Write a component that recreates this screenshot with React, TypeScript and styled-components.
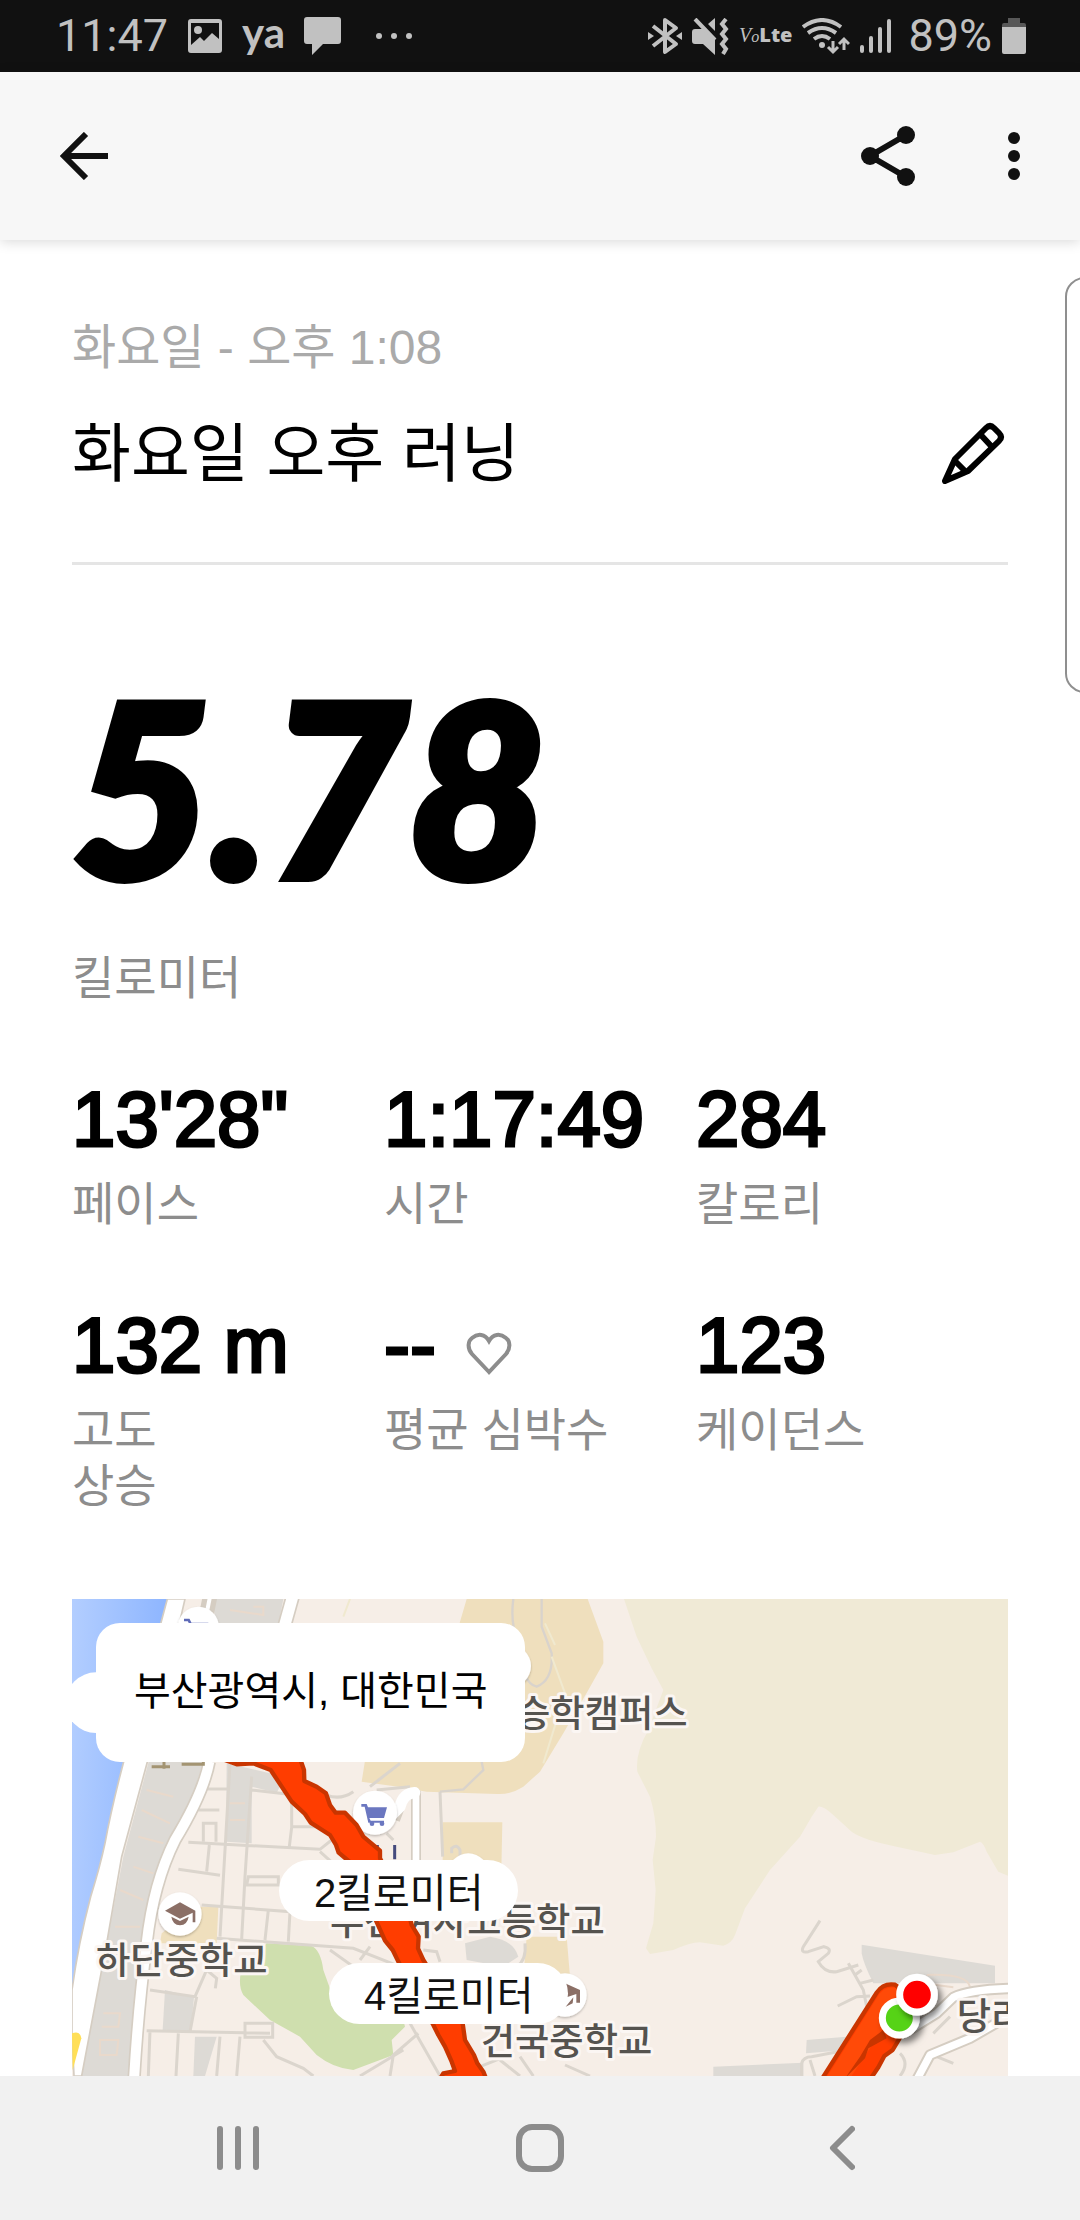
import React from "react";
import styled, { createGlobalStyle } from "styled-components";

const GlobalStyle = createGlobalStyle`
  * { box-sizing: border-box; }
  html, body { margin: 0; padding: 0; background: #ffffff; }
  body { font-family: "Liberation Sans", "Noto Sans CJK KR", sans-serif; color: #000000; }
  svg { display: block; flex: none; }
  h1, h2, p, dl, dt, dd { margin: 0; font-weight: 400; }
`;

const Screen = styled.div`
  height: 100vh;
  display: flex;
  flex-direction: column;
  overflow: hidden;
  background: #ffffff;
`;

const StatusBar = styled.header`
  flex: none;
  height: 72px;
  padding: 0 54px 0 56px;
  display: flex;
  align-items: center;
  justify-content: space-between;
  background: #111111;
  color: #c1c1c1;
  font-family: Roboto, sans-serif;
  font-size: 45px;
  line-height: 56px;
`;

const StatusGroup = styled.div<{ $gap: number }>`
  display: flex;
  align-items: center;
  gap: ${(p) => p.$gap}px;
`;

const BatteryLevel = styled.span`
  padding-left: 6px;
`;

const AppBadge = styled.span`
  width: 42px;
  font-family: Lato, sans-serif;
  font-weight: 700;
  font-size: 42px;
  line-height: 40px;
  padding-bottom: 8px;
`;

const Volte = styled.span`
  display: flex;
  align-items: baseline;
  font-family: "Open Sans", sans-serif;
  font-weight: 800;
  font-size: 20px;
  line-height: 32px;
  em {
    font-family: "Liberation Serif", serif;
    font-weight: 400;
  }
  em + em {
    font-size: 16px;
  }
`;

const AppBar = styled.nav`
  flex: none;
  height: 168px;
  padding: 0 30px 0 48px;
  display: flex;
  align-items: center;
  background: #f7f7f7;
  box-shadow: 0 2px 12px rgba(0, 0, 0, 0.15);
  z-index: 1;
`;

const Spacer = styled.span`
  flex: 1;
`;

const IconButton = styled.button`
  flex: none;
  padding: 0;
  border: 0;
  background: none;
  color: inherit;
  display: flex;
  align-items: center;
  justify-content: center;
`;

const BarButton = styled(IconButton)`
  width: 72px;
  height: 96px;
  color: #111111;
  & + & { margin-left: 54px; }
`;

const Content = styled.main`
  position: relative;
  flex: 1;
  min-height: 0;
  overflow: hidden;
  display: flex;
  flex-direction: column;
  padding: 80px 72px 0;
`;

const EdgeHandle = styled.div`
  position: absolute;
  top: 37px;
  right: -24px;
  width: 39px;
  height: 416px;
  border: 2px solid #8f8f8f;
  border-radius: 20px;
  background: #ffffff;
`;

const RunHeader = styled.section`
  border-bottom: 3px solid #e5e5e5;
  padding-bottom: 72px;
`;

const DateLine = styled.p`
  font-size: 48px;
  line-height: 56px;
  color: #aaaaaa;
  margin-bottom: 40px;
`;

const TitleRow = styled.div`
  display: flex;
  align-items: center;
  justify-content: space-between;
`;

const Title = styled.h1`
  padding-top: 2px;
  font-size: 64px;
  line-height: 72px;
`;

const Distance = styled.section`
  padding-top: 100px;
  margin-bottom: 73px;
`;

const DistanceValue = styled.p`
  font-family: Lato, sans-serif;
  font-style: italic;
  font-weight: 900;
  font-size: 240px;
  line-height: 240px;
  margin-bottom: 45px;
  -webkit-text-stroke: 8px #000000;
`;

const Label = styled.p`
  font-size: 46px;
  line-height: 56px;
  color: #8d8d8d;
`;

const StatGrid = styled.dl`
  display: grid;
  grid-template-columns: repeat(3, 1fr);
  row-gap: 73px;
  margin-bottom: 85px;
`;

const Stat = styled.div`
  display: flex;
  flex-direction: column-reverse;
  justify-content: flex-end;
  white-space: nowrap;
`;

const StatValue = styled.dd`
  display: flex;
  align-items: center;
  gap: 30px;
  font-size: 78px;
  line-height: 80px;
  margin-bottom: 17px;
  -webkit-text-stroke: 3px #000000;
  svg { margin-top: 18px; }
`;

const MapCard = styled.section`
  position: relative;
  flex: 1 0 477px;
  overflow: hidden;
  background: #f6eee7;
`;

const MapDrawing = styled.svg`
  width: 100%;
  height: 100%;
  text {
    font-family: "Noto Sans CJK KR", sans-serif;
    font-weight: 500;
    font-size: 112px;
    fill: #55534f;
    stroke: #fbf6f3;
    stroke-width: 18px;
    stroke-linejoin: round;
    paint-order: stroke;
  }
`;

const PlaceCallout = styled.div`
  position: absolute;
  top: 24px;
  left: 24px;
  padding: 40px 38px 43px;
  border-radius: 24px;
  background: #ffffff;
  font-size: 40px;
  line-height: 56px;
  white-space: nowrap;
`;

const KmPin = styled.div<{ $x: number; $y: number }>`
  position: absolute;
  left: ${(p) => p.$x}px;
  top: ${(p) => p.$y}px;
  padding: 5px 35px 0;
  border-radius: 31px;
  background: #ffffff;
  color: #111111;
  font-size: 40px;
  line-height: 56px;
  white-space: nowrap;
`;

const SystemNav = styled.nav`
  flex: none;
  height: 144px;
  padding: 0 8%;
  display: flex;
  background: #f1f1f1;
  color: #8c8c8c;
`;

const NavButton = styled(IconButton)`
  flex: 1;
`;

const stats = [
  { label: "페이스", value: "13'28\"" },
  { label: "시간", value: "1:17:49" },
  { label: "칼로리", value: "284" },
  { label: "고도\n상승", value: "132 m" },
  { label: "평균 심박수", value: "--", heart: true },
  { label: "케이던스", value: "123" },
];

const StatLabel = styled(Label).attrs({ as: "dt" })`
  white-space: pre-line;
`;

const HeartIcon = () => (
  <svg width="46" height="44" viewBox="0 0 46 44" fill="none" stroke="#8d8d8d" strokeWidth="4">
    <path d="M23 40 L6 22 C1 16 2 9 6 6 C12 1 19 2 23 9 C27 2 34 1 40 6 C44 9 45 16 40 22 Z" />
  </svg>
);

const StatusLeftIcons = () => (
  <>
    <svg width="34" height="34" viewBox="0 0 34 34" fill="#c1c1c1">
      <path fillRule="evenodd" d="M3 0H31Q34 0 34 3V31Q34 34 31 34H3Q0 34 0 31V3Q0 0 3 0ZM3 4V26L12 18L16 22L24 14L31 20V4Z" />
      <circle cx="10" cy="11" r="4" />
    </svg>
    <AppBadge>ya</AppBadge>
    <svg width="37" height="38" viewBox="0 0 37 38" fill="#c1c1c1">
      <path d="M3 0H34Q37 0 37 3V24Q37 27 34 27H19L8 38V27H3Q0 27 0 24V3Q0 0 3 0Z" />
    </svg>
  </>
);

const roadCase = "#d5cdc2";
const lane = "#dbd5cd";

const RunMap = () => (
  <MapDrawing viewBox="6 27 2808 1431" preserveAspectRatio="xMinYMin slice" role="img" aria-label="러닝 경로 지도">
    <defs>
      <linearGradient id="river" x1="0" y1="0" x2="1" y2="0.15">
        <stop offset="0" stopColor="#b3ceff" />
        <stop offset="1" stopColor="#8db5ff" />
      </linearGradient>
      <filter id="pinShadow" x="-40%" y="-40%" width="190%" height="190%">
        <feDropShadow dx="12" dy="14" stdDeviation="10" floodOpacity="0.5" />
      </filter>
      <filter id="poiShadow" x="-20%" y="-20%" width="140%" height="150%">
        <feDropShadow dx="0" dy="4" stdDeviation="3" floodOpacity="0.25" />
      </filter>
    </defs>
    <rect x="6" y="27" width="2808" height="1431" fill="#f6eee7" />

    {/* hills, campus grounds and parks */}
    <path fill="#f0ead6" d="M1662 27L1700 140L1745 235L1780 300L1735 420Q1695 490 1702 545L1740 620Q1758 680 1758 740L1748 810L1757 900L1750 1000L1728 1075L1740 1092L1810 1080Q1860 1058 1890 1057L1960 1067Q1985 1060 1995 1035L2025 955L2100 840L2190 740L2225 680L2245 650Q2260 648 2290 675L2345 725Q2380 750 2480 770L2595 795L2650 787L2730 755Q2740 758 2750 785L2785 845L2814 857V27Z" />
    <g fill="#efdfbd">
      <path d="M1190 27H1553L1600 155V220L1555 300L1480 430L1410 545L1360 590Q1320 615 1280 612L1070 605L985 590L875 575L890 480L1110 300Z" />
      <path d="M1118 697L1297 697L1294 840H1118Z" />
      <path d="M1370 1040L1490 1040L1500 1160H1360Z" />
      <path d="M380 950L445 950L440 1060H270L275 1030Z" />
    </g>
    <g fill="#dddad5">
      <path d="M425 27H640L625 105H440Z" />
      <path d="M240 500H405L330 740L250 900L215 1100L175 1458H35L110 1060L160 800Z" />
      <path d="M470 520L645 560L620 608L545 590V760L468 755Z" />
      <path d="M285 1200L372 1222L362 1325L278 1320Z" />
      <path d="M375 1340H440L405 1458H370Z" />
      <path d="M1185 1060L1260 1040Q1330 1050 1345 1100L1300 1130L1190 1110Z" />
      <path d="M2375 1064L2775 1127V1180H2410Q2380 1120 2375 1090Z" />
      <path d="M2210 1350L2330 1340V1380L2208 1390Z" />
      <path d="M1930 1430L2200 1418V1458H1930Z" />
    </g>
    <path fill="#cfdfae" d="M590 1060L725 1068Q752 1080 760 1140L785 1210L1000 1290L1005 1310L965 1350L970 1395L850 1440Q790 1435 740 1395L690 1340L600 1290L520 1215Q505 1190 512 1150Z" />

    {/* minor streets */}
    <g fill="none" stroke={lane} strokeWidth="9">
      <path d="M410 597H480M545 600L650 612M385 660H448M355 757L750 778L785 750M325 838L450 856M480 520L450 1040M545 560L525 860L515 1048M665 620V710H740M665 712L658 770" />
      <path d="M400 755V700H438V755M418 765L410 845M535 860H625V885H530ZM395 945L660 965L655 1055M595 960L585 1050M440 1045L850 1075L990 1130" />
      <path d="M240 1200L375 1220L410 1140L440 1165L436 1195M380 1220L360 1325M230 1322L600 1330M525 1300H608V1342H525ZM240 1322L235 1458M325 1330L318 1458M450 1340L440 1458M510 1340L500 1458M580 1350L620 1400L700 1435L730 1458" />
      <path d="M750 785L800 830M780 1080L850 1130L980 1150M900 1070L870 1110M1110 605L1118 800M920 600L1020 590M740 600Q800 640 850 605M950 730L970 750M900 590L990 520M1145 790V775Q1160 760 1170 780V800" />
      <path d="M1060 1080L1100 1085L1110 1115M1020 1300L1110 1458M1045 1330L970 1395L960 1458M1230 1430L1330 1390M1290 1410L1350 1458M1350 1400L1390 1458M1485 1425L1560 1458M1000 1380L870 1458" />
      <path d="M1340 1130Q1370 1110 1365 1060" />
      <path d="M2250 992L2200 1070Q2190 1090 2215 1085L2262 1070Q2285 1075 2275 1090L2245 1115Q2265 1150 2300 1145L2365 1125M2335 1120L2380 1200L2390 1250M2303 1248L2360 1220L2400 1218M2355 1155L2375 1140M2370 1180L2410 1170" />
      <path d="M2195 1458V1420Q2200 1400 2225 1400L2330 1380M2220 1410L2235 1458M2490 1390Q2520 1420 2490 1458M2590 1330L2640 1280M2600 1400L2650 1420M2570 1290L2620 1260" />
    </g>
    <g fill="none" stroke="#e9d9cb" strokeWidth="6">
      <path d="M230 600L310 620M215 660L300 700M205 740L280 760M190 830L250 850M150 900L220 930M135 1010L210 1010M100 1270H150L145 1310H95M90 1350H145L140 1395H90ZM480 640H525M480 690H525M480 60L580 75V50H550M2570 1155Q2690 1150 2700 1190M2560 1180L2650 1192" />
    </g>
    <g fill="none" stroke="#d9d3cc" strokeWidth="7">
      <path d="M1330 27Q1320 100 1345 160Q1355 280 1400 290Q1450 270 1445 190L1415 110V27M1110 605L1180 598L1240 540L1235 515" />
    </g>
    <path d="M1425 100L1455 165M1445 200L1485 310L1420 520M840 27L820 80" fill="none" stroke="#f0e9cf" strokeWidth="6" />

    {/* river and main roads */}
    <path fill="url(#river)" d="M6 27H292L165 500Q125 650 105 760Q90 830 62 920Q25 1060 6 1200Z" />
    <path fill="#ffffff" stroke={roadCase} strokeWidth="5" d="M292 27L165 500Q125 650 105 760Q90 830 62 920Q25 1060 6 1200V1330L12 1458H35L110 1060L155 800L235 505L345 27Z" />
    <path fill="#ffdf57" d="M6 1330Q30 1320 34 1345L8 1440Z" />
    <g fill="none" strokeLinejoin="round">
      <path d="M418 515Q400 610 315 750Q250 880 230 1060Q205 1250 192 1470" stroke={roadCase} strokeWidth="40" />
      <path d="M418 515Q400 610 315 750Q250 880 230 1060Q205 1250 192 1470" stroke="#ffffff" strokeWidth="30" />
      <path d="M668 20L640 120M420 20L400 120" stroke={roadCase} strokeWidth="44" />
      <path d="M668 20L640 120" stroke="#ffffff" strokeWidth="34" />
      <path d="M420 20L400 120" stroke="#ffffff" strokeWidth="12" />
      <path d="M1038 830V610Q1000 610 990 650L975 690" stroke={roadCase} strokeWidth="30" />
      <path d="M1038 830V605" stroke="#ffffff" strokeWidth="20" />
      <path d="M1034 608Q1000 610 990 650L965 675" stroke="#ffffff" strokeWidth="34" strokeLinecap="round" />
      <path d="M2520 1320L2600 1270L2650 1222Q2700 1198 2830 1195M2540 1470L2580 1395L2700 1345L2830 1270" stroke={roadCase} strokeWidth="34" />
      <path d="M2520 1320L2600 1270L2650 1222Q2700 1198 2830 1195M2540 1470L2580 1395L2700 1345L2830 1270" stroke="#ffffff" strokeWidth="22" />
    </g>

    {/* points of interest */}
    <g fill="#ffffff" filter="url(#poiShadow)">
      <circle cx="385" cy="112" r="62" />
      <circle cx="915" cy="668" r="66" />
      <circle cx="330" cy="972" r="65" />
      <circle cx="1195" cy="852" r="62" />
      <circle cx="1485" cy="1215" r="65" />
      <circle cx="1320" cy="228" r="63" />
    </g>
    <circle cx="78" cy="338" r="91" fill="#ffffff" />
    <path d="M342 90H356L362 102H415" fill="none" stroke="#5f6bb8" strokeWidth="8" />
    <g fill="#6b77c0">
      <path d="M874 642H890L894 652H951L942 684H898L902 692H942V698H895L884 650H874Z" />
      <circle cx="906" cy="701" r="7" />
      <circle cx="936" cy="701" r="7" />
    </g>
    <g fill="#8b6f66">
      <path d="M285 962L330 937L376 962V997H368V968L330 986Z" />
      <path d="M304 980L330 993L356 980Q352 1005 330 1006Q308 1005 304 980Z" />
      <path d="M1485 1180L1530 1200V1238H1519V1212L1490 1222ZM1487 1250L1510 1222L1508 1240Z" />
    </g>
    <path d="M922 765V808M974 765V808" stroke="#454a7d" strokeWidth="9" />
    <path d="M245 530H300M335 523H400V512M282 510V536" fill="none" stroke="#a39472" strokeWidth="9" />

    <text x="1338" y="412">승학캠퍼스</text>
    <text x="78" y="1153">하단중학교</text>
    <text x="780" y="1036">부산여자고등학교</text>
    <text x="1232" y="1396">건국중학교</text>
    <text x="2660" y="1320">당리</text>

    {/* recorded route */}
    <g fill="#ff3d00" stroke="#c93500" strokeWidth="13" strokeLinejoin="round">
      <path d="M450 505L500 523L550 520L602 540L665 635L705 672L722 698L780 735L798 765L806 788L850 825L915 985L945 1052L968 1080L985 1115L1090 1305L1105 1335L1125 1370L1145 1415L1155 1443L1120 1450L1108 1470H1250L1240 1445L1222 1420L1212 1395L1185 1350L1178 1300L1060 1110L1044 1075L1046 1040L1025 1005L1020 985L930 805V782L880 740L860 705L825 668H797L780 645L768 610L740 590L703 573L702 540L690 505Z" />
      <path d="M2250 1476L2420 1208Q2440 1178 2475 1184L2510 1210V1300L2486 1350L2468 1380L2443 1398L2425 1432L2395 1476Z" />
    </g>
    <path fill="#ff4a08" d="M2268 1465L2428 1212Q2445 1188 2475 1193L2500 1215L2430 1330L2340 1465Z" />
    <path fill="#c93500" d="M2440 1320L2400 1350L2370 1400L2325 1465L2385 1405L2395 1375L2450 1345Z" />
    <g stroke="#ffffff" strokeWidth="21" filter="url(#pinShadow)">
      <circle cx="2488" cy="1284" r="51" fill="#56d319" />
    </g>
    <g stroke="#ffffff" strokeWidth="21" filter="url(#pinShadow)">
      <circle cx="2541" cy="1214" r="52" fill="#ff0000" />
    </g>
  </MapDrawing>
);

export default function App() {
  return (
    <>
      <GlobalStyle />
      <Screen>
        <StatusBar>
          <StatusGroup $gap={20}>
            <time>11:47</time>
            <StatusLeftIcons />
            <svg width="54" height="8" viewBox="0 0 54 8" fill="#c1c1c1">
              <circle cx="18" cy="4" r="3" />
              <circle cx="33" cy="4" r="3" />
              <circle cx="48" cy="4" r="3" />
            </svg>
          </StatusGroup>
          <StatusGroup $gap={10}>
            <svg width="34" height="38" viewBox="0 0 34 38" fill="none" stroke="#c1c1c1" strokeWidth="4" strokeLinejoin="round">
              <path d="M5 9L28 27L17 35V3L28 11L5 29" />
              <path d="M0 15L6 19L0 23ZM34 15L28 19L34 23Z" fill="#c1c1c1" stroke="none" />
            </svg>
            <svg width="37" height="37" viewBox="0 0 37 37" fill="#c1c1c1">
              <path d="M3 11H12L23 22V37L11 26H3Q0 26 0 23V14Q0 11 3 11ZM23 0V13L16 6Z" />
              <path d="M3 1L23 22M34 1L30 6L34 11L30 16L34 21L30 26L34 31L31 36" fill="none" stroke="#c1c1c1" strokeWidth="4" />
            </svg>
            <Volte>
              <em>V</em>
              <em>o</em>
              Lte
            </Volte>
            <svg width="48" height="37" viewBox="0 0 48 37" fill="none" stroke="#c1c1c1" strokeWidth="4">
              <path d="M1 9Q20 -5 39 9M6 15Q20 5 34 15M12 21Q20 15 28 21" />
              <circle cx="20" cy="27" r="3" fill="#c1c1c1" stroke="none" />
              <path d="M31 23V34M26 29L31 34L36 29M42 32V21M37 26L42 21L47 26" strokeWidth="3" />
            </svg>
            <svg width="32" height="34" viewBox="0 0 32 34" fill="#c1c1c1">
              <rect x="0" y="26" width="4" height="8" rx="2" />
              <rect x="9" y="17" width="4" height="17" rx="2" />
              <rect x="18" y="8" width="4" height="26" rx="2" />
              <rect x="27" y="0" width="4" height="34" rx="2" />
            </svg>
            <BatteryLevel>89%</BatteryLevel>
            <svg width="24" height="36" viewBox="0 0 24 36">
              <path d="M6 0H18V5H22Q24 5 24 7V10H0V7Q0 5 2 5H6Z" fill="#585858" />
              <path d="M0 9H24V34Q24 36 22 36H2Q0 36 0 34Z" fill="#c1c1c1" />
            </svg>
          </StatusGroup>
        </StatusBar>

        <AppBar>
          <BarButton aria-label="뒤로">
            <svg width="48" height="48" viewBox="0 0 48 48" fill="none" stroke="#111111" strokeWidth="6">
              <path d="M26 2L4 24L26 46M4 24H48" />
            </svg>
          </BarButton>
          <Spacer />
          <BarButton aria-label="공유">
            <svg width="54" height="60" viewBox="0 0 54 60" fill="#111111">
              <path d="M45 9L9 30L45 51" fill="none" stroke="#111111" strokeWidth="6" />
              <circle cx="45" cy="9" r="9" />
              <circle cx="9" cy="30" r="9" />
              <circle cx="45" cy="51" r="9" />
            </svg>
          </BarButton>
          <BarButton aria-label="더보기">
            <svg width="12" height="48" viewBox="0 0 12 48" fill="#111111">
              <circle cx="6" cy="6" r="6" />
              <circle cx="6" cy="24" r="6" />
              <circle cx="6" cy="42" r="6" />
            </svg>
          </BarButton>
        </AppBar>

        <Content>
          <EdgeHandle />
          <RunHeader>
            <DateLine>화요일 - 오후 1:08</DateLine>
            <TitleRow>
              <Title>화요일 오후 러닝</Title>
              <IconButton aria-label="제목 수정">
                <svg width="66" height="62" viewBox="0 0 66 62" fill="none" stroke="#000000" strokeWidth="6" strokeLinejoin="round">
                  <path d="M3 59L13 37L44 6Q48 2 52 6L57 11Q61 15 57 19L26 49Z" />
                  <path d="M38 12L50 25M13 39L24 50" />
                </svg>
              </IconButton>
            </TitleRow>
          </RunHeader>

          <Distance>
            <DistanceValue>5.78</DistanceValue>
            <Label>킬로미터</Label>
          </Distance>

          <StatGrid>
            {stats.map((s) => (
              <Stat key={s.label}>
                <StatLabel>{s.label}</StatLabel>
                <StatValue>
                  {s.value}
                  {s.heart && <HeartIcon />}
                </StatValue>
              </Stat>
            ))}
          </StatGrid>

          <MapCard>
            <RunMap />
            <KmPin $x={207} $y={261}>2킬로미터</KmPin>
            <KmPin $x={257} $y={364}>4킬로미터</KmPin>
            <PlaceCallout>부산광역시, 대한민국</PlaceCallout>
          </MapCard>
        </Content>

        <SystemNav>
          <NavButton aria-label="최근 앱">
            <svg width="42" height="44" viewBox="0 0 42 44" fill="#8c8c8c">
              <rect x="0" y="0" width="6" height="44" rx="3" />
              <rect x="18" y="0" width="6" height="44" rx="3" />
              <rect x="36" y="0" width="6" height="44" rx="3" />
            </svg>
          </NavButton>
          <NavButton aria-label="홈">
            <svg width="48" height="48" viewBox="0 0 48 48" fill="none" stroke="#8c8c8c" strokeWidth="6">
              <rect x="3" y="3" width="42" height="42" rx="13" />
            </svg>
          </NavButton>
          <NavButton aria-label="이전">
            <svg width="26" height="46" viewBox="0 0 26 46" fill="none" stroke="#8c8c8c" strokeWidth="6" strokeLinecap="round" strokeLinejoin="round">
              <path d="M23 4L4 23L23 42" />
            </svg>
          </NavButton>
        </SystemNav>
      </Screen>
    </>
  );
}
